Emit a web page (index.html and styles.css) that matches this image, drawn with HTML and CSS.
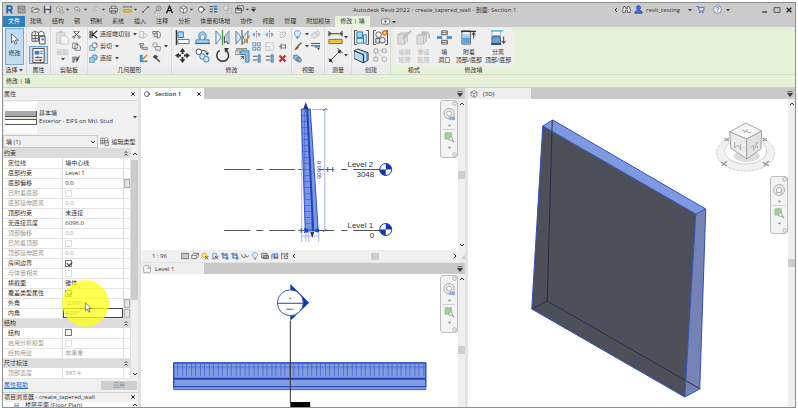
FILE: index.html
```html
<!DOCTYPE html>
<html lang="zh-CN">
<head>
    <meta charset="UTF-8">
    <meta name="viewport" content="width=device-width, initial-scale=1.0">
    <title>Autodesk Revit 2022 - create_tapered_wall</title>
    <link rel="stylesheet" href="styles.css">
</head>
<body>
    <!-- Icon sprite -->
    <svg class="sprite" aria-hidden="true">
        <symbol id="i-logo" viewBox="0 0 12 12"><path d="M3 11V1.500h3.500a2.600 2.600 0 0 1 0 5.200H3M6 6.700l3.500 4.300" fill="none" stroke="#1c62a8" stroke-width="2.400"/></symbol>
        <symbol id="i-home" viewBox="0 0 12 12"><path d="M1.500 1.500h9v9h-9zM1.500 4h9M4 4v6.500M6 6h3M6 8h3" fill="none" stroke="#555"/></symbol>
        <symbol id="i-open" viewBox="0 0 12 12"><path d="M1 9.500v-6h3l1 1h4V6M1 9.500L3 6h8.500L9.500 9.500z" fill="#eee" stroke="#555" stroke-width=".9"/></symbol>
        <symbol id="i-save" viewBox="0 0 12 12"><path d="M1 1h10v10H1z" fill="#555e70"/><path d="M3 1h6v4H3zM3.500 7h5v4h-5z" fill="#e6e6e6"/></symbol>
        <symbol id="i-sync" viewBox="0 0 12 12"><path d="M6 1l4 2v4L6 9.500 2 7V3zM2 3l4 2 4-2M6 5v4" fill="#ddd" stroke="#999"/><circle cx="9" cy="9" r="2.300" fill="#ccc" stroke="#999"/></symbol>
        <symbol id="i-undo" viewBox="0 0 12 12"><path d="M5 2L1.500 5 5 8V6.200c2-.2 3 .3 3.500 2.300 2-2.500 0-5-3.500-5z" fill="#eee" stroke="#666" stroke-width=".9"/></symbol>
        <symbol id="i-redo" viewBox="0 0 12 12"><path d="M7 2l3.500 3L7 8V6.200c-2-.2-3 .3-3.500 2.300-2-2.500 0-5 3.500-5z" fill="#ddd" stroke="#aaa" stroke-width=".9"/></symbol>
        <symbol id="i-print" viewBox="0 0 12 12"><path d="M3 4V1.500h6V4M1 4.500h10v4.500H1zM3 7h6v4H3z" fill="#eee" stroke="#444"/></symbol>
        <symbol id="i-ruler" viewBox="0 0 12 12"><path d="M1 2.500h10M1 1v3M11 1v3" stroke="#555" fill="none"/><path d="M1 6h10v3.500H1z" fill="#eeb52d" stroke="#a67a14" stroke-width=".6"/></symbol>
        <symbol id="i-dim" viewBox="0 0 12 12"><path d="M2 10L10 2M1 8l3 3M8 1l3 3" stroke="#444" fill="none" stroke-width="1.100"/></symbol>
        <symbol id="i-tag" viewBox="0 0 12 12"><circle cx="7.500" cy="4.500" r="3.300" fill="none" stroke="#777"/><path d="M5 7l-3.500 4M7.500 3v3" stroke="#777"/></symbol>
        <symbol id="i-text" viewBox="0 0 12 12"><path d="M2 11L6 1.500 10 11M3.500 7.500h5" fill="none" stroke="#222" stroke-width="1.900"/></symbol>
        <symbol id="i-cube" viewBox="0 0 12 12"><path d="M6 1l4.500 2.300v5L6 11 1.500 8.300v-5zM1.500 3.300L6 5.500l4.500-2.200M6 5.500V11" fill="#eee" stroke="#555" stroke-width=".9"/></symbol>
        <symbol id="i-section" viewBox="0 0 12 12"><circle cx="5.500" cy="6" r="3.500" fill="#fff" stroke="#444"/><path d="M5.500 1L11 6l-5.500 5V9.500a3.500 3.500 0 0 0 0-7z" fill="#333"/></symbol>
        <symbol id="i-thin" viewBox="0 0 12 12"><path d="M1 2h4M1 5.500h4M1 9h4" stroke="#333" stroke-width="1.200"/><path d="M6.500 2H11M6.500 5.500H11M6.500 9H11" stroke="#3674bb" stroke-width="2.200"/></symbol>
        <symbol id="i-closewin" viewBox="0 0 12 12"><path d="M1 1h6v6H1zM5 5h6v6H5zM6.500 6.500l3 3M9.500 6.500l-3 3" fill="#ddd" stroke="#aaa" stroke-width=".9"/></symbol>
        <symbol id="i-windows" viewBox="0 0 12 12"><path d="M3.500 1h7.500v6H3.500zM1 4h7.500v6.500H1z" fill="#eee" stroke="#444"/><path d="M1 5h7.500" stroke="#444" stroke-width="1.500"/></symbol>
        <symbol id="i-find" viewBox="0 0 12 12"><path d="M1 6l1.500-4h2l.5 3h2l.5-3h2L11 6v4H7.500V7h-3v3H1z" fill="#eee" stroke="#444"/></symbol>
        <symbol id="i-user" viewBox="0 0 12 12"><circle cx="6" cy="3.500" r="2.700" fill="#3c70d8" stroke="#24479c"/><path d="M1 11c0-3 2-4 5-4s5 1 5 4z" fill="#3c70d8" stroke="#24479c"/></symbol>
        <symbol id="i-cart" viewBox="0 0 12 12"><path d="M.5 2H3l1.500 6H10l1-4.500H3.500" fill="#dde3f4" stroke="#44528c"/><circle cx="5" cy="10" r="1" fill="#44528c"/><circle cx="9" cy="10" r="1" fill="#44528c"/></symbol>
        <symbol id="i-help" viewBox="0 0 12 12"><circle cx="6" cy="6" r="5.200" fill="#f4f8fd" stroke="#556b91"/><path d="M4.300 4.500C4.500 2.400 8 2.600 7.600 4.800 7.400 6 6 5.800 6 7.300M6 8.300v1.200" fill="none" stroke="#2a63b0" stroke-width="1.200"/></symbol>
        <symbol id="i-min" viewBox="0 0 12 12"><path d="M2 9h7" stroke="#333" stroke-width="2"/></symbol>
        <symbol id="i-max" viewBox="0 0 12 12"><path d="M1.500 2.500h9v7h-9z" fill="none" stroke="#333" stroke-width="1.200"/></symbol>
        <symbol id="i-x" viewBox="0 0 12 12"><path d="M2.500 2.500l7 7M9.500 2.500l-7 7" stroke="#222" stroke-width="2" fill="none"/></symbol>
        <symbol id="i-panel" viewBox="0 0 12 12"><rect x=".5" y="2.500" width="11" height="7" rx="2" fill="#eee" stroke="#666"/><path d="M4 5h4L6 8z" fill="#444"/></symbol>
        <symbol id="i-down" viewBox="0 0 6 6"><path d="M1 2h4L3 4.500z" fill="#444"/></symbol>
        <symbol id="i-menu" viewBox="0 0 6 6"><path d="M.5.7h5M.5 2.500h5L3 5.500z" fill="#333" stroke="#333" stroke-width=".7"/></symbol>
        <symbol id="i-up" viewBox="0 0 6 6"><path d="M1 4l2-2 2 2" fill="none" stroke="#333"/></symbol>
        <symbol id="i-chev" viewBox="0 0 6 6"><path d="M1 2l2 2 2-2" fill="none" stroke="#333"/></symbol>
        <symbol id="i-left" viewBox="0 0 6 6"><path d="M4 1L2 3l2 2" fill="none" stroke="#333"/></symbol>
        <symbol id="i-right" viewBox="0 0 6 6"><path d="M2 1l2 2-2 2" fill="none" stroke="#333"/></symbol>
        <symbol id="i-fold" viewBox="0 0 6 6"><path d="M1.500 3L3 1.500 4.500 3M1.500 5.500L3 4l1.500 1.500" fill="none" stroke="#333" stroke-width=".9"/></symbol>
        <symbol id="i-grip" viewBox="0 0 6 6"><path d="M6 1v5H1z" fill="#c9c9c9"/></symbol>

        <!-- Ribbon -->
        <symbol id="i-cursor" viewBox="0 0 12 16"><path d="M2 1v12l3-3 2 5 2-1-2-4.500h4z" fill="#fff" stroke="#444"/></symbol>
        <symbol id="i-typeprop" viewBox="0 0 16 16"><path d="M1 3l3-2 4 2 3-2 3 2v6H1z" fill="#fff" stroke="#555"/><path d="M1 6h13M4.500 2v10M8 3v9M1 9v3h7" fill="none" stroke="#555"/><path d="M9 7h6v8H9z" fill="#e8f1fa" stroke="#555"/><path d="M11 9h3v2h-3z" fill="#4d91d0"/></symbol>
        <symbol id="i-props" viewBox="0 0 16 16"><path d="M2 .5h12v15H2z" fill="#fff" stroke="#444"/><path d="M4 3h5v4H4z" fill="#2f7ec5"/><path d="M10 3.500h2.500M10 6h2.500M4 10h8M4 13h8" stroke="#444"/><path d="M7 9v2M10 12v2" stroke="#444" stroke-width="1.500"/></symbol>
        <symbol id="i-paste" viewBox="0 0 16 18"><path d="M1 3h10v13H1z" fill="#ddd" stroke="#c9c9c9"/><path d="M4 1h4v3H4z" fill="#ccc"/><path d="M6 7h6l3 3v7H6z" fill="#f4f4f4" stroke="#c4c4c4"/></symbol>
        <symbol id="i-scissors" viewBox="0 0 12 12"><path d="M2 2l8 8M10 2L2 10" stroke="#444" stroke-width="1.200"/><path d="M2 2h8" stroke="#777"/><circle cx="2.500" cy="9.500" r="1.500" fill="#fff" stroke="#444"/><circle cx="9.500" cy="9.500" r="1.500" fill="#fff" stroke="#444"/></symbol>
        <symbol id="i-copy" viewBox="0 0 12 12"><path d="M1 1.500h6v7H1zM4 3.500h4l3 2.500v5H4z" fill="#fff" stroke="#555"/></symbol>
        <symbol id="i-match" viewBox="0 0 12 12"><path d="M1 4h6v3H3v4H1z" fill="#7bb3e1" stroke="#555" stroke-width=".8"/><path d="M11 1L6 7l-1.500 4L8 9z" fill="#555"/></symbol>
        <symbol id="i-cope" viewBox="0 0 12 12"><path d="M1.500 1v10M4 1v10M11 1L5 6l6 5" fill="none" stroke="#333" stroke-width="1.600"/></symbol>
        <symbol id="i-cut" viewBox="0 0 12 12"><circle cx="7.500" cy="4.500" r="3.500" fill="#fff" stroke="#466f9e" stroke-width="1.200"/><path d="M1 5h4v3h3v3H1z" fill="#d8ecfa" stroke="#3f7fb5"/><path d="M8 2l3-1-1 3z" fill="#c33"/></symbol>
        <symbol id="i-join" viewBox="0 0 12 12"><circle cx="7.500" cy="4.500" r="3.500" fill="#a7d3f2" stroke="#3f7fb5" stroke-width="1.200"/><path d="M1 5h6v6H1z" fill="#a7d3f2" stroke="#3f7fb5"/></symbol>
        <symbol id="i-roof" viewBox="0 0 12 12"><path d="M1 2h5v8H1zM6 4l5 3-5 4z" fill="#eee" stroke="#bbb"/></symbol>
        <symbol id="i-face" viewBox="0 0 12 12"><path d="M1 2h8l2 2v5l-4 2V5H1zM3 5v4h4" fill="#f5f5f5" stroke="#555"/><path d="M4 3h4v4z" fill="#4b96d4"/></symbol>
        <symbol id="i-beam" viewBox="0 0 12 12"><path d="M1 2h5v2H4v3h7v3H5V8H2V4H1z" fill="#ddd" stroke="#555" stroke-width=".9"/></symbol>
        <symbol id="i-split" viewBox="0 0 12 12"><circle cx="4" cy="4" r="3" fill="#eee" stroke="#777"/><path d="M5 6h6v5H5z" fill="#eee" stroke="#777"/></symbol>
        <symbol id="i-paint" viewBox="0 0 12 12"><path d="M1 1v10h10V8H5V1z" fill="#4394d0"/><path d="M11 1L5 7" stroke="#c48a36" stroke-width="2"/><path d="M6 11V8h5" fill="#eab340"/></symbol>
        <symbol id="i-hammer" viewBox="0 0 12 12"><path d="M1 4l3-3 4 2-3 4z" fill="#444"/><path d="M5 5l5.500 5.500" stroke="#555" stroke-width="2"/></symbol>
        <symbol id="i-align" viewBox="0 0 16 16"><path d="M1.500 0v16" stroke="#333" stroke-width="1.400"/><path d="M3 2h6v6H3z" fill="#a5d2f2" stroke="#3477b0"/><path d="M3 10h12v4.500H3z" fill="#fff" stroke="#3477b0"/></symbol>
        <symbol id="i-move" viewBox="0 0 16 16"><path d="M8 0l3 4H9v3h3V5l4 3-4 3V9H9v3h2l-3 4-3-4h2V9H4v2L0 8l4-3v2h3V4H5z" fill="#333"/><path d="M6.500 6.500h3v3h-3z" fill="#fff"/></symbol>
        <symbol id="i-offset" viewBox="0 0 16 16"><path d="M1 10.500h4.500C2.500 6 4.500 2 8 2s5.500 4 2.500 8.500H15V14H1z" fill="#a5d2f2" stroke="#4583b5"/><path d="M6.500 10.500C4.500 7 6 5 8 5s3.500 2 1.500 5.500z" fill="#fff" stroke="#4583b5"/><path d="M0 14.500h16" stroke="#555"/></symbol>
        <symbol id="i-copyobj" viewBox="0 0 16 16"><circle cx="4" cy="4" r="3" fill="#fff" stroke="#444"/><path d="M7 3c4-1 6 1 6 3" fill="none" stroke="#333"/><path d="M11 5h4l-2 3z" fill="#333"/><circle cx="8" cy="9" r="3" fill="#cce7f8" stroke="#3477b0"/><circle cx="12" cy="12" r="3" fill="#cce7f8" stroke="#3477b0"/></symbol>
        <symbol id="i-mirror" viewBox="0 0 16 16"><path d="M1 1v14l5-6V7z" fill="#e4f2fb" stroke="#457eac"/><path d="M8 0v16" stroke="#4c9b45" stroke-width="1.400"/><path d="M15 1v14l-5-6V7z" fill="#b8cbd8" stroke="#7d99ad"/><path d="M10 7v7l2-2 2 3" fill="#fff" stroke="#333"/></symbol>
        <symbol id="i-mirrordraw" viewBox="0 0 16 16"><path d="M1 1v14l5-6V7zM14 1l-5 6v2l4 5z" fill="#d5e9f6" stroke="#457eac"/><path d="M7.500 0v16" stroke="#333"/><path d="M15 6l-6 7-1 2 2-1 6-7z" fill="#f2b63b" stroke="#8d6417" stroke-width=".6"/></symbol>
        <symbol id="i-rotate" viewBox="0 0 16 16"><path d="M5 2.500A6.300 6.300 0 1 0 11 2.300" fill="none" stroke="#333" stroke-width="1.600"/><path d="M10 0h5l-4 5z" fill="#333"/></symbol>
        <symbol id="i-trim" viewBox="0 0 16 16"><path d="M6 3h9v12h-4V7H6z" fill="#87bce4" stroke="#457eac"/><path d="M0 3h5v4H0z" fill="#ddd" stroke="#888"/><path d="M1 1h12M6 12l3-3M9 12V9H6" stroke="#444" fill="none"/></symbol>
        <symbol id="i-break" viewBox="0 0 12 12"><path d="M0 6l3-2.500h1v5H3zM12 6L9 3.500H8v5h1z" fill="#68aadc"/><path d="M6 1v10" stroke="#c94545" stroke-dasharray="2 1"/></symbol>
        <symbol id="i-array" viewBox="0 0 12 12"><path d="M1 1h4v4H1zM7 1h4v4H7zM1 7h4v4H1zM7 7h4v4H7z" fill="#d8ecfa" stroke="#3f83bd"/></symbol>
        <symbol id="i-trimone" viewBox="0 0 12 12"><path d="M1 3h6M1 8h6" stroke="#555" stroke-width="1.500"/><path d="M8 1h3v10H8z" fill="#77b1de" stroke="#457eac"/></symbol>
        <symbol id="i-scale" viewBox="0 0 12 12"><path d="M1 1h10v10H1zM1 6h5v5" fill="#f4f4f4" stroke="#bbb"/></symbol>
        <symbol id="i-unpin" viewBox="0 0 12 12"><path d="M2 2l8 8M5 3h5v4M3 6v4h4" fill="none" stroke="#aaa"/></symbol>
        <symbol id="i-pin" viewBox="0 0 12 12"><path d="M1 6h3M4 2v8M4 4h6v4H4zM10 3v6" fill="#eee" stroke="#666"/></symbol>
        <symbol id="i-delete" viewBox="0 0 12 12"><path d="M2 2l8 8M10 2l-8 8" stroke="#d22b35" stroke-width="3"/></symbol>
        <symbol id="i-bulb" viewBox="0 0 12 12"><path d="M4 8C0 5 2 1 6 1s6 4 2 7v1H4z" fill="#d6ebff" stroke="#4d8dd0"/><path d="M4.500 10h3M5 11.500h2" stroke="#666"/></symbol>
        <symbol id="i-brush" viewBox="0 0 12 12"><path d="M11 1L6 6" stroke="#555" stroke-width="2"/><path d="M6 5l2 2c-2 3-4 4-7 4 2-1 2-4 5-6z" fill="#a0531e"/></symbol>
        <symbol id="i-boxes" viewBox="0 0 12 12"><path d="M1 6l4-3 3 2v4l-3 2-4-2zM6 3l3-2 2 2v4l-3 2" fill="#e4e4e4" stroke="#bbb"/></symbol>
        <symbol id="i-lines" viewBox="0 0 12 12"><path d="M0 2h12M0 5h12" stroke="#555" stroke-width="1.500"/><path d="M5 5.500h7v2H5z" fill="#3f83bd"/><path d="M8 8h4l-2 3z" fill="#555"/></symbol>
        <symbol id="i-hidebox" viewBox="0 0 12 12"><path d="M1 2l4-1 3 3v4l-4 1-3-3zM5 5l4-1 2 3v3l-3 1-3-2z" fill="#8fbfe2" stroke="#446b8c"/></symbol>
        <symbol id="i-measure" viewBox="0 0 16 16"><path d="M1 1v6M15 1v6M1 4h14M3 2.500L1 4l2 1.500M13 2.500L15 4l-2 1.500" fill="none" stroke="#333"/><path d="M1 10h14v4.500H1z" fill="#f0c23c" stroke="#8c6a16"/></symbol>
        <symbol id="i-aligndim" viewBox="0 0 16 16"><path d="M2 14L13 3M0 11l5 5M10 0l6 6" fill="none" stroke="#444"/><path d="M1 15l1-4 3 3zM14 2l-4 1 3 3z" fill="#222"/></symbol>
        <symbol id="i-assembly" viewBox="0 0 16 16"><path d="M3 .5H.5v15H3M13 .5h2.500v15H13" fill="none" stroke="#444"/><path d="M3 2h6v6H3z" fill="#a7d3f2" stroke="#3477b0"/><path d="M6 9h4v5H3V9zM10 5h3v9h-3z" fill="#d8ecfa" stroke="#3477b0"/></symbol>
        <symbol id="i-group" viewBox="0 0 16 16"><path d="M3 .5H.5v15H3M13 .5h2.500v15H13" fill="none" stroke="#444"/><circle cx="6" cy="5" r="3" fill="#fff" stroke="#555"/><path d="M3 9h4v5H3z" fill="#ddd" stroke="#555"/><circle cx="10" cy="11" r="3" fill="#eee" stroke="#555"/><circle cx="12.500" cy="3" r="3" fill="#ee7d2d"/><circle cx="12.500" cy="3" r="1.200" fill="#ffe16d"/></symbol>
        <symbol id="i-parts" viewBox="0 0 16 16"><path d="M0 3l10 4v9L0 11z" fill="#b6dcf4" stroke="#333"/><path d="M0 3l4-2 11 4v8l-5 3V7z" fill="#73b2e0" stroke="#333"/><path d="M2 2l10 4v8" fill="none" stroke="#fff"/></symbol>
        <symbol id="i-similar" viewBox="0 0 16 16"><path d="M1 1h4v4H1zM10 1h4v4h-4zM1 10h4v4H1z" fill="#eee" stroke="#aaa"/><path d="M5 3h5M3 5v5M5 5l5 5" stroke="#aaa" stroke-dasharray="2 1"/><circle cx="12" cy="12" r="2.500" fill="#eee" stroke="#aaa"/></symbol>
        <symbol id="i-editprofile" viewBox="0 0 16 16"><path d="M1 5l3-2h7v9l-3 3H1z" fill="#ddd" stroke="#bbb"/><path d="M1 5h7v10M8 5l3-2" fill="none" stroke="#bbb"/><path d="M15 1L6 9" stroke="#bbb" stroke-width="2"/></symbol>
        <symbol id="i-resetprofile" viewBox="0 0 16 16"><path d="M1 6l3-2h7v8l-3 3H1z" fill="#ddd" stroke="#bbb"/><path d="M1 6h7v9M8 6l3-2" fill="none" stroke="#bbb"/><path d="M7 4c4-4 8-1 7 5M7 1v4h4" fill="none" stroke="#bbb" stroke-width="1.500"/></symbol>
        <symbol id="i-opening" viewBox="0 0 16 16"><path d="M5 1h6v4H5zM5 11h6v4H5z" fill="#fff" stroke="#555"/><path d="M5 3h6M5 13h6" stroke="#555"/><path d="M0 8h5M11 8h5" stroke="#3585c9" stroke-width="2.500"/><path d="M5 6v4M11 6v4" stroke="#3585c9"/></symbol>
        <symbol id="i-attach" viewBox="0 0 16 16"><path d="M1 1h9v14H1z" fill="#fff" stroke="#555"/><path d="M1.500 4h8v4h-8z" fill="#a5d2f2"/><path d="M1.500 8h8v6.500h-8z" fill="#5ba3d9"/><path d="M0 1.500h16" stroke="#333" stroke-width="1.500"/><path d="M13.500 9V3M11.500 5.500l2-3 2 3" stroke="#333" fill="none"/></symbol>
        <symbol id="i-detach" viewBox="0 0 16 16"><path d="M1 1h9v5H1z" fill="#fff" stroke="#5cc0cd"/><path d="M1 7h9v8H1z" fill="#5ba3d9" stroke="#557"/><path d="M0 1h13" stroke="#5cc0cd" stroke-width="1.500"/><path d="M0 15h11" stroke="#333" stroke-width="1.500"/><path d="M13.500 7v7M11.500 11.500l2 3 2-3" stroke="#333" fill="none"/></symbol>

        <!-- View control bar -->
        <symbol id="v-detail" viewBox="0 0 12 12"><path d="M.5 2h11v8H.5z" fill="#ddd" stroke="#444"/><path d="M1 4h10M1 6h10M1 8h10" stroke="#999" stroke-width=".7"/></symbol>
        <symbol id="v-style" viewBox="0 0 12 12"><path d="M1 5l3-3h7v5l-3 3H1zM1 5h7l3-3M8 5v5" fill="#fff" stroke="#444"/></symbol>
        <symbol id="v-sun" viewBox="0 0 12 12"><circle cx="5" cy="5" r="3.500" fill="#ffe373" stroke="#d19b20"/><path d="M6 6l5 5M11 6l-5 5" stroke="#c63030" stroke-width="1.500"/></symbol>
        <symbol id="v-shadow" viewBox="0 0 12 12"><circle cx="5.500" cy="5" r="3.500" fill="#d2e7f8" stroke="#4d79b0"/><path d="M1 10h5" stroke="#666"/><path d="M6 6l5 5M11 6l-5 5" stroke="#c63030" stroke-width="1.500"/></symbol>
        <symbol id="v-crop" viewBox="0 0 12 12"><path d="M3 1v8h9M0 3h9v9" fill="none" stroke="#3e79b8" stroke-width="1.800"/><path d="M5 5h3" stroke="#c33" stroke-width="1.500"/></symbol>
        <symbol id="v-glasses" viewBox="0 0 12 12"><path d="M0 3l3 5h3l1-3 2 3 3-3M6 5V3" fill="none" stroke="#555" stroke-width="1.200"/></symbol>
        <symbol id="v-temp" viewBox="0 0 12 12"><path d="M1 2h8v7H1zM4 5h7v5H4z" fill="#ddd" stroke="#444"/><circle cx="7" cy="7" r="1.500" fill="#fff" stroke="#444"/></symbol>
        <symbol id="v-analytic" viewBox="0 0 12 12"><path d="M1 10V4l4-2v8M5 10V4l5-2v8" fill="#aacbe8" stroke="#4d6c91"/><path d="M6 7h5v3H6z" fill="#c55"/></symbol>
        <symbol id="v-constraint" viewBox="0 0 12 12"><path d="M1 1v10M1 3h10M9 1v4M5 6h5v4H5z" fill="none" stroke="#555" stroke-width="1.200"/></symbol>
        <symbol id="v-sheet" viewBox="0 0 12 12"><path d="M1 3l1.500-2H8v2h3v8H1zM5 5h6" fill="#fff" stroke="#888"/></symbol>
        <symbol id="n-wheel" viewBox="0 0 14 14"><circle cx="6.500" cy="6.500" r="5.800" fill="#f3f3f3" stroke="#a4a4a4"/><circle cx="6.500" cy="6.500" r="3" fill="#fff" stroke="#a4a4a4"/><path d="M3 11l2-3M10 11L8 8" stroke="#a4a4a4"/></symbol>
        <symbol id="n-wheel2d" viewBox="0 0 14 14"><circle cx="6.500" cy="6" r="5.500" fill="#f3f3f3" stroke="#a4a4a4"/><circle cx="6.500" cy="6" r="2.800" fill="#fff" stroke="#a4a4a4"/><path d="M6 9h7v4H6z" fill="#b9cbe7"/><path d="M7 10h2l-2 2h2M10.500 10v2.500h1.500V10z" stroke="#6a88b8" fill="none" stroke-width=".7"/></symbol>
        <symbol id="n-zoom" viewBox="0 0 14 14"><path d="M2 1h8v8H2z" fill="#a6cf9d" stroke="#8aba80"/><circle cx="9" cy="8.500" r="2.300" fill="#fff" stroke="#888"/><path d="M11 10l2.500 3" stroke="#888" stroke-width="1.300"/></symbol>
        <symbol id="n-dot" viewBox="0 0 6 6"><circle cx="3" cy="3" r="2.200" fill="#eee" stroke="#aaa"/></symbol>
    </svg>

    <div class="app">
        <header class="titlebar">
            <div class="quick-access">
                <svg class="icon"><use href="#i-logo"/></svg>
                <svg class="icon"><use href="#i-home"/></svg>
                <svg class="icon spaced"><use href="#i-open"/></svg>
                <svg class="icon"><use href="#i-save"/></svg>
                <svg class="icon"><use href="#i-sync"/></svg><svg class="caret"><use href="#i-down"/></svg>
                <svg class="icon"><use href="#i-undo"/></svg><svg class="caret"><use href="#i-down"/></svg>
                <svg class="icon"><use href="#i-redo"/></svg><svg class="caret"><use href="#i-down"/></svg>
                <svg class="icon"><use href="#i-print"/></svg>
                <svg class="icon spaced"><use href="#i-ruler"/></svg><svg class="caret"><use href="#i-down"/></svg>
                <svg class="icon"><use href="#i-dim"/></svg>
                <svg class="icon"><use href="#i-tag"/></svg>
                <svg class="icon"><use href="#i-text"/></svg>
                <svg class="icon spaced"><use href="#i-cube"/></svg><svg class="caret"><use href="#i-down"/></svg>
                <svg class="icon"><use href="#i-section"/></svg>
                <svg class="icon"><use href="#i-thin"/></svg>
                <svg class="icon spaced"><use href="#i-closewin"/></svg>
                <svg class="icon"><use href="#i-windows"/></svg><svg class="caret"><use href="#i-down"/></svg>
                <svg class="caret"><use href="#i-menu"/></svg>
            </div>
            <h1 class="app-title">Autodesk Revit 2022 - create_tapered_wall - 剖面: Section 1</h1>
            <div class="account">
                <svg class="caret"><use href="#i-left"/></svg>
                <svg class="icon"><use href="#i-find"/></svg>
                <svg class="icon"><use href="#i-user"/></svg>
                <span class="user-name">revit_testing</span>
                <svg class="caret"><use href="#i-down"/></svg>
                <svg class="icon"><use href="#i-cart"/></svg>
                <svg class="icon help"><use href="#i-help"/></svg><svg class="caret"><use href="#i-down"/></svg>
            </div>
            <div class="window-buttons">
                <button aria-label="最小化"><svg><use href="#i-min"/></svg></button>
                <button aria-label="最大化"><svg><use href="#i-max"/></svg></button>
                <button aria-label="关闭"><svg><use href="#i-x"/></svg></button>
            </div>
        </header>

        <nav class="tabs">
            <button class="tab file">文件</button>
            <button class="tab">建筑</button>
            <button class="tab">结构</button>
            <button class="tab">钢</button>
            <button class="tab">预制</button>
            <button class="tab">系统</button>
            <button class="tab">插入</button>
            <button class="tab">注释</button>
            <button class="tab">分析</button>
            <button class="tab">体量和场地</button>
            <button class="tab">协作</button>
            <button class="tab">视图</button>
            <button class="tab">管理</button>
            <button class="tab">附加模块</button>
            <button class="tab active">修改 | 墙</button>
            <svg class="tab-toggle"><use href="#i-panel"/></svg><svg class="caret"><use href="#i-down"/></svg>
        </nav>

        <section class="ribbon">
            <div class="panel panel-select">
                <div class="panel-body">
                    <button class="tool selected"><svg class="cursor-icon"><use href="#i-cursor"/></svg><span>修改</span></button>
                </div>
                <div class="panel-label">选择 <svg class="caret"><use href="#i-down"/></svg></div>
            </div>
            <div class="panel panel-props">
                <div class="panel-body">
                    <div class="stack two">
                        <button aria-label="类型属性"><svg class="big"><use href="#i-typeprop"/></svg></button>
                        <button class="on" aria-label="属性"><svg class="big"><use href="#i-props"/></svg></button>
                    </div>
                </div>
                <div class="panel-label">属性</div>
            </div>
            <div class="panel panel-clip">
                <div class="panel-body">
                    <button class="tool disabled"><svg class="big"><use href="#i-paste"/></svg><span>粘贴</span><svg class="caret"><use href="#i-down"/></svg></button>
                    <div class="stack">
                        <button aria-label="剪切"><svg><use href="#i-scissors"/></svg></button>
                        <button aria-label="复制"><svg><use href="#i-copy"/></svg></button>
                        <button aria-label="匹配"><svg><use href="#i-match"/></svg></button>
                    </div>
                </div>
                <div class="panel-label">剪贴板</div>
            </div>
            <div class="panel panel-geom">
                <div class="panel-body">
                    <div class="stack wide">
                        <button><svg><use href="#i-cope"/></svg>连接端切割<svg class="caret"><use href="#i-down"/></svg></button>
                        <button><svg><use href="#i-cut"/></svg>剪切<svg class="caret"><use href="#i-down"/></svg></button>
                        <button><svg><use href="#i-join"/></svg>连接<svg class="caret"><use href="#i-down"/></svg></button>
                    </div>
                    <div class="stack">
                        <button aria-label="屋顶"><svg><use href="#i-roof"/></svg></button>
                        <button aria-label="梁"><svg><use href="#i-beam"/></svg></button>
                        <button aria-label="填色"><svg><use href="#i-paint"/></svg></button>
                    </div>
                    <div class="stack with-caret">
                        <button aria-label="墙连接"><svg><use href="#i-face"/></svg></button>
                        <button aria-label="拆分面"><svg><use href="#i-split"/></svg><svg class="caret"><use href="#i-down"/></svg></button>
                        <button aria-label="拆除"><svg><use href="#i-hammer"/></svg></button>
                    </div>
                </div>
                <div class="panel-label">几何图形</div>
            </div>
            <div class="panel panel-modify">
                <div class="panel-body">
                    <div class="stack two">
                        <button aria-label="对齐"><svg class="big"><use href="#i-align"/></svg></button>
                        <button aria-label="移动"><svg class="big"><use href="#i-move"/></svg></button>
                    </div>
                    <div class="stack two">
                        <button aria-label="偏移"><svg class="big"><use href="#i-offset"/></svg></button>
                        <button aria-label="复制"><svg class="big"><use href="#i-copyobj"/></svg></button>
                    </div>
                    <div class="stack two">
                        <button aria-label="镜像"><svg class="big"><use href="#i-mirror"/></svg></button>
                        <button aria-label="旋转"><svg class="big"><use href="#i-rotate"/></svg></button>
                    </div>
                    <div class="stack two">
                        <button aria-label="镜像绘制"><svg class="big"><use href="#i-mirrordraw"/></svg></button>
                        <button aria-label="修剪"><svg class="big"><use href="#i-trim"/></svg></button>
                    </div>
                    <div class="stack">
                        <button aria-label="拆分"><svg><use href="#i-break"/></svg></button>
                        <button aria-label="阵列"><svg><use href="#i-array"/></svg></button>
                        <button aria-label="修剪单个"><svg><use href="#i-trimone"/></svg></button>
                    </div>
                    <div class="stack">
                        <button aria-label="间隙拆分"><svg><use href="#i-break"/></svg></button>
                        <button aria-label="缩放"><svg><use href="#i-scale"/></svg></button>
                        <button aria-label="修剪多个"><svg><use href="#i-trimone"/></svg></button>
                    </div>
                    <div class="stack">
                        <button aria-label="解锁"><svg><use href="#i-unpin"/></svg></button>
                        <button aria-label="锁定"><svg><use href="#i-pin"/></svg></button>
                        <button aria-label="删除"><svg><use href="#i-delete"/></svg></button>
                    </div>
                </div>
                <div class="panel-label">修改</div>
            </div>
            <div class="panel panel-view">
                <div class="panel-body">
                    <div class="stack with-caret">
                        <button aria-label="隐藏"><svg><use href="#i-bulb"/></svg><svg class="caret"><use href="#i-down"/></svg></button>
                        <button aria-label="替换"><svg><use href="#i-brush"/></svg><svg class="caret"><use href="#i-down"/></svg></button>
                        <button aria-label="置换"><svg><use href="#i-hidebox"/></svg></button>
                    </div>
                    <div class="stack">
                        <button aria-label="选择框"><svg><use href="#i-boxes"/></svg></button>
                        <button aria-label="线处理"><svg><use href="#i-lines"/></svg></button>
                    </div>
                </div>
                <div class="panel-label">视图</div>
            </div>
            <div class="panel panel-measure">
                <div class="panel-body">
                    <div class="stack two">
                        <button aria-label="测量"><svg class="big"><use href="#i-measure"/></svg><svg class="caret"><use href="#i-down"/></svg></button>
                        <button aria-label="尺寸"><svg class="big"><use href="#i-aligndim"/></svg><svg class="caret"><use href="#i-down"/></svg></button>
                    </div>
                </div>
                <div class="panel-label">测量</div>
            </div>
            <div class="panel panel-create">
                <div class="panel-body">
                    <div class="stack two">
                        <button aria-label="部件"><svg class="big"><use href="#i-assembly"/></svg></button>
                        <button aria-label="零件"><svg class="big"><use href="#i-parts"/></svg></button>
                    </div>
                    <div class="stack two">
                        <button aria-label="组"><svg class="big"><use href="#i-group"/></svg></button>
                        <button aria-label="类似"><svg class="big"><use href="#i-similar"/></svg></button>
                    </div>
                </div>
                <div class="panel-label">创建</div>
            </div>
            <div class="panel contextual panel-mode">
                <div class="panel-body">
                    <button class="tool disabled"><svg class="big"><use href="#i-editprofile"/></svg><span>编辑</span><span>轮廓</span></button>
                    <button class="tool disabled"><svg class="big"><use href="#i-resetprofile"/></svg><span>重设</span><span>轮廓</span></button>
                </div>
                <div class="panel-label">模式</div>
            </div>
            <div class="panel contextual panel-wall">
                <div class="panel-body">
                    <button class="tool"><svg class="big"><use href="#i-opening"/></svg><span>墙</span><span>洞口</span></button>
                    <button class="tool"><svg class="big"><use href="#i-attach"/></svg><span>附着</span><span>顶部/底部</span></button>
                    <button class="tool"><svg class="big"><use href="#i-detach"/></svg><span>分离</span><span>顶部/底部</span></button>
                </div>
                <div class="panel-label">修改墙</div>
            </div>
        </section>

        <div class="options-bar">修改 | 墙</div>

        <main class="workspace">
            <aside class="sidebar">
                <div class="palette-title">属性 <button aria-label="关闭"><svg><use href="#i-x"/></svg></button></div>
                <div class="type-selector">
                    <svg class="type-thumb" viewBox="0 0 32 31">
                        <path d="M0 0h32v31H0z" fill="#fff"/>
                        <path d="M0 9h32v5H0z" fill="#a9a9a9"/>
                        <path d="M0 14.500h32M0 17.500h32M0 22.500h32M31.500 9v14" stroke="#555" fill="none"/>
                        <path d="M0 16h32" stroke="#d8d8b4"/>
                    </svg>
                    <div class="type-name">
                        <div>基本墙</div>
                        <div>Exterior - EIFS on Mtl. Stud</div>
                    </div>
                    <svg class="caret"><use href="#i-down"/></svg>
                </div>
                <div class="filter-row">
                    <div class="select-wrap">
                        <select aria-label="图元"><option>墙 (1)</option></select>
                        <svg class="caret"><use href="#i-chev"/></svg>
                    </div>
                    <button class="edit-type"><svg><use href="#i-typeprop"/></svg>编辑类型</button>
                </div>

                <div class="props">
                    <table class="props-table">
                        <tr class="group"><th colspan="3"><div>约束<svg><use href="#i-fold"/></svg></div></th></tr>
                        <tr><td>定位线</td><td>墙中心线</td><td></td></tr>
                        <tr><td>底部约束</td><td>Level 1</td><td></td></tr>
                        <tr><td><label for="baseOffset">底部偏移</label></td><td><input type="text" id="baseOffset" value="0.0"></td><td><button class="assoc" aria-label="关联参数"></button></td></tr>
                        <tr class="off"><td><label for="baseAttached">已附着底部</label></td><td><input type="checkbox" id="baseAttached" disabled></td><td></td></tr>
                        <tr class="off"><td>底部延伸距离</td><td>0.0</td><td></td></tr>
                        <tr><td>顶部约束</td><td>未连接</td><td></td></tr>
                        <tr><td><label for="height">无连接高度</label></td><td><input type="text" id="height" value="6096.0"></td><td></td></tr>
                        <tr class="off"><td>顶部偏移</td><td>0.0</td><td></td></tr>
                        <tr class="off"><td><label for="topAttached">已附着顶部</label></td><td><input type="checkbox" id="topAttached" disabled></td><td></td></tr>
                        <tr class="off"><td>顶部延伸距离</td><td>0.0</td><td></td></tr>
                        <tr><td><label for="bounding">房间边界</label></td><td><input type="checkbox" id="bounding" checked></td><td></td></tr>
                        <tr class="off"><td><label for="mass">与体量相关</label></td><td><input type="checkbox" id="mass" disabled></td><td></td></tr>
                        <tr><td>横截面</td><td>锥体</td><td></td></tr>
                        <tr><td><label for="override">覆盖类型属性</label></td><td><input type="checkbox" id="override" checked></td><td></td></tr>
                        <tr><td><label for="outer">外角</label></td><td><input type="text" id="outer" value="-2.00°"></td><td><button class="assoc" aria-label="关联参数"></button></td></tr>
                        <tr><td><label for="inner">内角</label></td><td class="editing"><input type="text" id="inner" value="4.00°"></td><td><button class="assoc" aria-label="关联参数"></button></td></tr>
                        <tr class="group"><th colspan="3"><div>结构<svg><use href="#i-fold"/></svg></div></th></tr>
                        <tr><td><label for="structural">结构</label></td><td><input type="checkbox" id="structural"></td><td></td></tr>
                        <tr class="off"><td><label for="analytical">启用分析模型</label></td><td><input type="checkbox" id="analytical" disabled></td><td></td></tr>
                        <tr class="off"><td>结构用途</td><td>非承重</td><td></td></tr>
                        <tr class="group"><th colspan="3"><div>尺寸标注<svg><use href="#i-fold"/></svg></div></th></tr>
                        <tr class="off"><td>顶部宽度</td><td>387.4</td><td></td></tr>
                    </table>
                    <div class="vscroll props-scroll">
                        <svg class="caret"><use href="#i-up"/></svg>
                        <div class="thumb"></div>
                        <svg class="caret"><use href="#i-chev"/></svg>
                    </div>
                    <!-- click highlight and pointer -->
                    <div class="click-halo"></div>
                    <svg class="pointer"><use href="#i-cursor"/></svg>
                </div>

                <div class="props-footer"><a href="#">属性帮助</a><button disabled>应用</button></div>
                <div class="palette-title browser">项目浏览器 - create_tapered_wall <button aria-label="关闭"><svg><use href="#i-x"/></svg></button></div>
                <div class="tree"><span>⊟</span> 楼层平面 (Floor Plan)<svg class="caret"><use href="#i-up"/></svg></div>
            </aside>

            <div class="column">
                <section class="view section-view">
                    <div class="view-tabs">
                        <button class="view-tab active"><svg><use href="#i-section"/></svg>Section 1<svg class="close"><use href="#i-x"/></svg></button>
                        <svg class="caret"><use href="#i-menu"/></svg>
                    </div>
                    <div class="view-main">
                        <div class="canvas">
                            <svg class="drawing" viewBox="141 99 317 151">
                                <defs>
                                    <pattern id="studs" x="301" y="109" width="7" height="6" patternUnits="userSpaceOnUse">
                                        <path d="M0 .5h7M3.500 0v6" stroke="#3f61cf" stroke-width=".7" fill="none"/>
                                    </pattern>
                                </defs>
                                <g stroke="#555" stroke-dasharray="26 6 7 6">
                                    <path d="M224 169.500h75M224 230.500h75"/>
                                </g>
                                <path d="M298 169.500h14M319 169.500h15M341 169.500h6M353 169.500h27M298 230.500h36M341 230.500h6M353 230.500h27" stroke="#555"/>
                                <path d="M301.500 109v133M305.500 231v11M308.500 231v11M318.500 231v11M301 236h18" stroke="#aab9ee" fill="none"/>
                                <path d="M301 109h9l8 122h-13z" fill="#7c97e6" stroke="#2f54cb"/>
                                <path d="M301 109h6l5 122h-7z" fill="url(#studs)"/>
                                <path d="M307 109l6 122" stroke="#1f44b8" stroke-width="2"/>
                                <path d="M303 109l2.500-7 2.500 7zM310 232h4l-2 6z" fill="#26347d"/>
                                <path d="M312 109.500h16M324.500 109v122" stroke="#a3b4ee" fill="none"/>
                                <path d="M323 111l3-3M323 232l3-3M325 169.500h9M327.500 167v5M332.500 167v5" stroke="#3b5bca"/>
                                <path d="M301 228v5M304 228l3 5M307 228l-3 5" stroke="#2146c0"/>
                                <circle cx="306" cy="230.500" r="2" fill="#2146c0"/><circle cx="317" cy="230.500" r="2" fill="#2146c0"/>
                                <text class="dim-text" transform="translate(321 179) rotate(-90)">6096.0</text>
                                <text class="level-text" x="373" y="167" text-anchor="end">Level 2</text>
                                <text class="level-text" x="374" y="177" text-anchor="end">3048</text>
                                <text class="level-text" x="373" y="228" text-anchor="end">Level 1</text>
                                <text class="level-text" x="374" y="238" text-anchor="end">0</text>
                                <g id="levelHead">
                                    <circle cx="385.500" cy="169.500" r="6" fill="#fff" stroke="#1b3cb0"/>
                                    <path d="M385.500 169.500v-6a6 6 0 0 1 6 6zM385.500 169.500v6a6 6 0 0 1-6-6z" fill="#1136b0"/>
                                </g>
                                <use href="#levelHead" y="60"/>
                            </svg>
                            <div class="navbar">
                                <svg class="dot"><use href="#n-dot"/></svg>
                                <svg class="nav-icon"><use href="#n-wheel2d"/></svg>
                                <svg class="caret"><use href="#i-down"/></svg>
                                <svg class="nav-icon zoom"><use href="#n-zoom"/></svg>
                                <svg class="caret"><use href="#i-down"/></svg>
                                <svg class="dot"><use href="#n-dot"/></svg>
                            </div>
                        </div>
                        <div class="vscroll">
                            <svg class="caret"><use href="#i-up"/></svg>
                            <div class="thumb small"></div>
                            <svg class="caret"><use href="#i-chev"/></svg>
                        </div>
                    </div>
                    <div class="view-controls">
                        <span class="scale">1 : 96</span>
                        <svg><use href="#v-detail"/></svg>
                        <svg><use href="#v-style"/></svg>
                        <svg><use href="#v-sun"/></svg>
                        <svg><use href="#v-shadow"/></svg>
                        <svg><use href="#v-crop"/></svg>
                        <svg><use href="#v-crop"/></svg>
                        <svg><use href="#v-glasses"/></svg>
                        <svg><use href="#i-bulb"/></svg>
                        <svg><use href="#v-temp"/></svg>
                        <svg><use href="#v-analytic"/></svg>
                        <svg><use href="#v-constraint"/></svg>
                        <div class="hscroll">
                            <svg class="caret"><use href="#i-left"/></svg>
                            <div class="thumb"></div>
                            <svg class="caret"><use href="#i-right"/></svg>
                        </div>
                        <svg class="grip"><use href="#i-grip"/></svg>
                    </div>
                </section>

                <section class="view plan-view">
                    <div class="view-tabs">
                        <button class="view-tab"><svg><use href="#v-sheet"/></svg>Level 1</button>
                        <svg class="caret"><use href="#i-menu"/></svg>
                    </div>
                    <div class="view-main">
                        <div class="canvas">
                            <svg class="drawing" viewBox="141 273 317 134">
                                <defs>
                                    <pattern id="planHatch" x="172" y="362" width="9" height="14" patternUnits="userSpaceOnUse">
                                        <path d="M.5 0v14M4.500 0v14M0 5h9" stroke="#3a5ccb" stroke-width=".7" fill="none"/>
                                    </pattern>
                                </defs>
                                <path d="M172.500 362.500h254v27h-254z" fill="#829be2" stroke="#3f60cb"/>
                                <path d="M173 363h253v13H173z" fill="url(#planHatch)"/>
                                <path d="M172.500 362.500h254v24h-254z" fill="none" stroke="#1c41b8"/>
                                <path d="M172 378.500h254" stroke="#1c41b8" stroke-width="2"/>
                                <path d="M290 283l19 19-19 18z" fill="#1136b0"/>
                                <circle cx="290" cy="302" r="13" fill="#fff" stroke="#3f5cb8"/>
                                <path d="M277 302.500h26" stroke="#1c41b8"/>
                                <path d="M289 297.500h2M286 308.500h7" stroke="#3f5cb8"/>
                                <path d="M290 320v83" stroke="#333"/>
                                <path d="M290 402h20v5h-20z" fill="#000"/>
                            </svg>
                            <div class="navbar">
                                <svg class="dot"><use href="#n-dot"/></svg>
                                <svg class="nav-icon"><use href="#n-wheel2d"/></svg>
                                <svg class="caret"><use href="#i-down"/></svg>
                                <svg class="nav-icon zoom"><use href="#n-zoom"/></svg>
                                <svg class="caret"><use href="#i-down"/></svg>
                                <svg class="dot"><use href="#n-dot"/></svg>
                            </div>
                        </div>
                        <div class="vscroll">
                            <svg class="caret"><use href="#i-up"/></svg>
                            <div class="thumb small low"></div>
                        </div>
                    </div>
                </section>
            </div>

            <section class="view view-3d">
                <div class="view-tabs">
                    <button class="view-tab"><svg><use href="#i-cube"/></svg>{3D}</button>
                    <svg class="caret"><use href="#i-menu"/></svg>
                </div>
                <div class="view-main">
                    <div class="canvas">
                        <svg class="drawing" viewBox="469 99 318 308">
                            <path d="M543 126l10-6 153 89-10 5z" fill="#7f99e1"/>
                            <path d="M696 214l10-5-6 180-15 8z" fill="#7482b5"/>
                            <path d="M543 126l153 88-11 183-153-88z" fill="#4e5059"/>
                            <path d="M552.500 120l-5 181 153 88M547.500 301l-15 8" fill="none" stroke="#262950" stroke-width="1"/>
                            <path d="M543 126l10-6 153 89-6 180-15 8-153-88zM543 126l153 88 10-5M696 214l-11 183" fill="none" stroke="#2f50c0"/>
                            <!-- view cube -->
                            <g stroke="#cfcfcf" fill="#f1f1f1">
                                <ellipse cx="746" cy="153" rx="29" ry="18" stroke-dasharray="3 1"/>
                                <ellipse cx="746" cy="151" rx="21" ry="13" fill="#fff"/>
                            </g>
                            <ellipse cx="747" cy="156" rx="13" ry="6" fill="#ddd"/>
                            <g fill="none" stroke="#999" stroke-width="1.200">
                                <path d="M721 162l6 4M727 161l-5 5M763 162l6 4M769 161l-5 5M725 138l4 3M729 138l-4 3M763 138l4 3M767 138l-4 3"/>
                            </g>
                            <g stroke="#a5a5a5" stroke-linejoin="round">
                                <path d="M730 132l16-9 16 8-15 8z" fill="#f8f8f8"/>
                                <path d="M730 132l17 7v20l-16-11z" fill="#ececec"/>
                                <path d="M747 139l15-8-1 18-14 10z" fill="#e2e2e2"/>
                            </g>
                            <path d="M742 130l9 3M744 133l4-4M735 142v6l3-3 3 5v-6M751 148l3-3v6M756 142l2 6M758 142l-3 6" fill="none" stroke="#adadad"/>
                        </svg>
                        <div class="navbar lower">
                            <svg class="dot"><use href="#n-dot"/></svg>
                            <svg class="nav-icon"><use href="#n-wheel"/></svg>
                            <svg class="caret"><use href="#i-down"/></svg>
                            <svg class="nav-icon zoom"><use href="#n-zoom"/></svg>
                            <svg class="caret"><use href="#i-down"/></svg>
                            <svg class="dot"><use href="#n-dot"/></svg>
                        </div>
                    </div>
                    <div class="vscroll">
                        <svg class="caret"><use href="#i-up"/></svg>
                        <div class="thumb small mid"></div>
                    </div>
                </div>
            </section>
        </main>
    </div>
</body>
</html>
```
FILE: styles.css
```css
* {
    margin: 0;
    padding: 0;
    box-sizing: border-box;
}

body {
    height: 100vh;
    padding: 2px 2px 0;
    background: #fff;
    color: #333;
    font-family: 'Open Sans', 'Noto Sans CJK SC', sans-serif;
    font-size: 6px;
    line-height: 8px;
    overflow: hidden;
}

svg {
    display: block;
    flex: none;
}

button, input, select {
    border: none;
    background: none;
    color: inherit;
    font: inherit;
}

.sprite {
    position: absolute;
    width: 0;
    height: 0;
}

.caret {
    width: 6px;
    height: 6px;
}

.app {
    display: flex;
    flex-direction: column;
    height: 100%;
    border: 1px solid #8f8f8f;
    background: #ececec;
}

/* Title bar */
.titlebar {
    display: flex;
    align-items: center;
    height: 13px;
    background: #cbcbcb;
}

.quick-access, .account, .window-buttons {
    display: flex;
    align-items: center;
}

.quick-access {
    gap: 3px;
    padding-left: 2px;
}

.icon {
    width: 9px;
    height: 9px;
}

.quick-access .spaced {
    margin-left: 2px;
}

.quick-access .caret {
    width: 5px;
    height: 5px;
    margin-left: -2px;
}

.app-title {
    margin-left: 97px;
    flex: 1;
    font-size: 6px;
    font-weight: 400;
    white-space: nowrap;
}

.account {
    gap: 3px;
    margin-right: 30px;
}

.account .help {
    margin-left: 5px;
}

.user-name {
    margin-right: 4px;
}

.window-buttons {
    gap: 4px;
    padding-right: 2px;
}

.window-buttons svg {
    width: 8px;
    height: 8px;
}

/* Ribbon tabs */
.tabs {
    display: flex;
    align-items: center;
    height: 11px;
    background: #cbcbcb;
}

.tab {
    height: 11px;
    padding: 0 5px;
    line-height: 11px;
    white-space: nowrap;
}

.tab.file {
    background: #2c80bd;
    color: #fff;
}

.tab.active {
    background: #e7f1dc;
}

.tab-toggle {
    width: 11px;
    height: 9px;
    margin-left: 10px;
}

/* Ribbon panels */
.ribbon {
    display: flex;
    height: 48px;
    background: #e6f1da;
    border-bottom: 1px solid #d5dfcb;
}

.panel {
    display: flex;
    flex-direction: column;
    flex: none;
    background: #efefef;
    border-right: 1px solid #dadada;
}

.panel-body {
    display: flex;
    justify-content: center;
    height: 38px;
    padding-top: 1px;
}

.panel-label {
    display: flex;
    align-items: center;
    justify-content: center;
    height: 9px;
    background: #ebebeb;
}

.panel-select { width: 24px; }
.panel-props { width: 24px; }
.panel-clip { width: 37px; }
.panel-geom { width: 84px; }
.panel-modify { width: 120px; }
.panel-view { width: 33px; }
.panel-measure { width: 27px; }
.panel-create { width: 39px; }
.panel-mode { width: 40px; }
.panel-wall { width: 79px; }

.contextual {
    border: none;
}

.contextual .panel-label {
    background: #e6f1da;
}

.panel-mode {
    margin-left: 3px;
}

.tool {
    display: flex;
    flex-direction: column;
    align-items: center;
    min-width: 19px;
    padding-top: 2px;
}

.tool span {
    white-space: nowrap;
}

.tool .big {
    margin-bottom: 3px;
}

.tool.disabled {
    color: #b5b5b5;
}

.tool.selected {
    height: 37px;
    padding-top: 4px;
    background: #c0dcf3;
    border: 1px solid #79a9d3;
}

.cursor-icon {
    width: 9px;
    height: 12px;
    margin-bottom: 4px;
}

.big {
    width: 15px;
    height: 15px;
}

.stack {
    display: grid;
    grid-auto-rows: 12px;
    width: 13px;
}

.stack.two {
    grid-auto-rows: 18px;
    width: 19px;
}

.panel-modify .two {
    width: 20px;
}

.stack.wide {
    width: 50px;
}

.stack.with-caret {
    width: 18px;
}

.stack button {
    display: flex;
    align-items: center;
    gap: 2px;
    white-space: nowrap;
}

.stack button > svg:not(.big):not(.caret) {
    width: 9px;
    height: 9px;
}

.stack.two button {
    justify-content: center;
    gap: 0;
}

.stack .on {
    background: #c0dcf3;
    border: 1px solid #6c9fcb;
}

.panel-measure .two {
    width: 23px;
}

.panel-wall .panel-body {
    gap: 1px;
}

.panel-wall .tool {
    padding-left: 1px;
    padding-right: 1px;
}

.options-bar {
    height: 13px;
    padding-left: 3px;
    background: #e6f1da;
    border-bottom: 1px solid #cfd6c6;
    line-height: 12px;
}

/* Workspace */
.workspace {
    display: grid;
    grid-template-columns: 135px 324fr 326fr;
    gap: 3px;
    flex: 1;
    min-height: 0;
    background: #e3e3e3;
}

.column {
    display: flex;
    flex-direction: column;
    gap: 1px;
    min-height: 0;
}

/* Properties palette */
.sidebar {
    display: flex;
    flex-direction: column;
    min-height: 0;
    overflow: hidden;
    background: #f0f0f0;
}

.palette-title {
    display: flex;
    align-items: center;
    justify-content: space-between;
    flex: none;
    height: 12px;
    padding: 0 2px 0 1px;
    white-space: nowrap;
}

.palette-title svg {
    width: 6px;
    height: 6px;
}

.palette-title.browser {
    height: 10px;
    border-top: 1px solid #d0d0d0;
}

.type-selector {
    display: flex;
    align-items: center;
    flex: none;
    height: 35px;
    padding: 0 0 2px 2px;
    border-top: 1px solid #d8d8d8;
}

.type-thumb {
    width: 32px;
    height: 31px;
}

.type-name {
    flex: 1;
    padding-left: 2px;
    white-space: nowrap;
}

.filter-row {
    display: flex;
    flex: none;
    height: 13px;
}

.select-wrap {
    position: relative;
    width: 95px;
}

.select-wrap select {
    width: 100%;
    height: 13px;
    padding-left: 2px;
    border: 1px solid #c6c6c6;
    appearance: none;
}

.select-wrap .caret {
    position: absolute;
    top: 4px;
    right: 2px;
}

.edit-type {
    display: flex;
    align-items: center;
    justify-content: center;
    gap: 2px;
    flex: 1;
    white-space: nowrap;
}

.edit-type svg {
    width: 9px;
    height: 9px;
}

.props {
    position: relative;
    display: flex;
    flex: none;
    background: #fff;
}

.props-table {
    flex: 1;
    table-layout: fixed;
    border-collapse: collapse;
}

.props-table tr {
    height: 10px;
}

.props-table td {
    width: 61px;
    height: 10px;
    padding-left: 2px;
    border-right: 1px solid #dcdcdc;
    border-bottom: 1px solid #e4e4e4;
    white-space: nowrap;
    line-height: 8px;
}

.props-table td:first-child {
    width: 60px;
    padding-left: 5px;
}

.props-table td:last-child {
    width: 7px;
    padding: 0;
}

.props-table .off {
    color: #9b9b9b;
}

.group th {
    height: 10px;
    background: #dcdcdc;
    font-weight: 400;
}

.group div {
    display: flex;
    align-items: center;
    justify-content: space-between;
    padding: 0 2px 0 1px;
}

.group svg {
    width: 6px;
    height: 6px;
}

.props-table input[type="text"] {
    display: block;
    width: 100%;
    height: 8px;
}

.props-table .editing {
    outline: 1px solid #444;
    outline-offset: -1px;
}

.props-table input[type="checkbox"] {
    position: relative;
    display: block;
    width: 7px;
    height: 7px;
    border: 1px solid #777;
    background: #fff;
    appearance: none;
}

.props-table input[type="checkbox"]:disabled {
    border-color: #ddd;
}

.props-table input[type="checkbox"]:checked::after {
    content: '';
    position: absolute;
    left: 1px;
    top: 0;
    width: 4px;
    height: 3px;
    border-left: 1px solid #333;
    border-bottom: 1px solid #333;
    transform: rotate(-45deg);
}

.assoc {
    display: block;
    width: 6px;
    height: 9px;
    background: #e2e2e2;
    border: 1px solid #b3b3b3;
}

.click-halo {
    position: absolute;
    left: 59px;
    top: 132px;
    width: 47px;
    height: 47px;
    border-radius: 50%;
    background: rgba(255, 255, 20, 0.75);
}

.pointer {
    position: absolute;
    left: 81px;
    top: 154px;
    width: 8px;
    height: 11px;
}

.props-footer {
    display: flex;
    align-items: center;
    justify-content: space-between;
    flex: none;
    height: 13px;
    padding: 0 1px;
}

.props-footer a {
    color: #1a6cc4;
}

.props-footer button {
    width: 36px;
    height: 9px;
    background: #cfcfcf;
    color: #8d8d8d;
    line-height: 9px;
}

.tree {
    display: flex;
    align-items: center;
    gap: 6px;
    flex: none;
    height: 7px;
    padding-left: 11px;
    background: #fff;
    line-height: 6px;
    white-space: nowrap;
}

.tree .caret {
    margin-left: auto;
}

/* Scroll bars */
.vscroll {
    display: flex;
    flex-direction: column;
    align-items: center;
    justify-content: space-between;
    flex: none;
    width: 7px;
    padding: 2px 0;
    background: #efefef;
}

.vscroll .thumb {
    width: 7px;
    background: #cdcdcd;
}

.vscroll .small {
    height: 8px;
}

.vscroll .low {
    margin-bottom: 51px;
}

.vscroll .mid {
    margin-bottom: 138px;
}

.props-scroll {
    padding-top: 3px;
}

.props-scroll .thumb {
    height: 140px;
    margin: 3px 0 auto;
}

/* Views */
.view {
    display: flex;
    flex-direction: column;
    min-width: 0;
    min-height: 0;
}

.section-view {
    flex: 174;
}

.plan-view {
    flex: 144;
}

.view-tabs {
    display: flex;
    align-items: center;
    justify-content: space-between;
    flex: none;
    height: 11px;
    padding-right: 2px;
    background: #cacaca;
}

.view-tab {
    display: flex;
    align-items: center;
    gap: 4px;
    width: 63px;
    height: 100%;
    padding: 0 2px;
    background: #eee;
}

.view-tab.active {
    background: #fff;
    font-weight: 600;
}

.view-tab svg {
    width: 8px;
    height: 8px;
}

.view-tab .close {
    width: 6px;
    height: 6px;
    margin-left: auto;
}

.view-main {
    display: flex;
    flex: 1;
    min-height: 0;
}

.canvas {
    position: relative;
    flex: 1;
    min-width: 0;
    background: #fff;
}

.drawing {
    width: 100%;
    height: 100%;
}

.level-text {
    fill: #333;
    font-family: 'Liberation Sans', sans-serif;
    font-size: 8px;
}

.dim-text {
    fill: #2146c0;
    font-family: 'Liberation Sans', sans-serif;
    font-size: 6px;
}

.navbar {
    position: absolute;
    top: 1px;
    right: 0;
    display: flex;
    flex-direction: column;
    align-items: center;
    justify-content: space-between;
    width: 18px;
    height: 58px;
    background: #f3f3f3;
    border: 1px solid #bdbdbd;
    border-radius: 3px;
}

.navbar.lower {
    top: 77px;
}

.navbar .dot {
    align-self: flex-end;
    width: 5px;
    height: 5px;
}

.navbar .caret {
    width: 5px;
    height: 5px;
    opacity: 0.6;
}

.nav-icon {
    width: 13px;
    height: 13px;
}

.nav-icon.zoom {
    width: 12px;
    height: 14px;
    padding-top: 2px;
    border-top: 1px solid #d0d0d0;
}

.view-controls {
    display: flex;
    align-items: center;
    gap: 2px;
    flex: none;
    height: 12px;
    background: #f0f0f0;
}

.view-controls > svg {
    width: 8px;
    height: 8px;
}

.scale {
    width: 38px;
    padding-left: 11px;
}

.hscroll {
    display: flex;
    align-items: center;
    justify-content: space-between;
    flex: 1;
    height: 7px;
}

.hscroll .thumb {
    width: 8px;
    height: 7px;
    background: #cdcdcd;
}

.view-controls .grip {
    width: 5px;
    height: 5px;
}
```
